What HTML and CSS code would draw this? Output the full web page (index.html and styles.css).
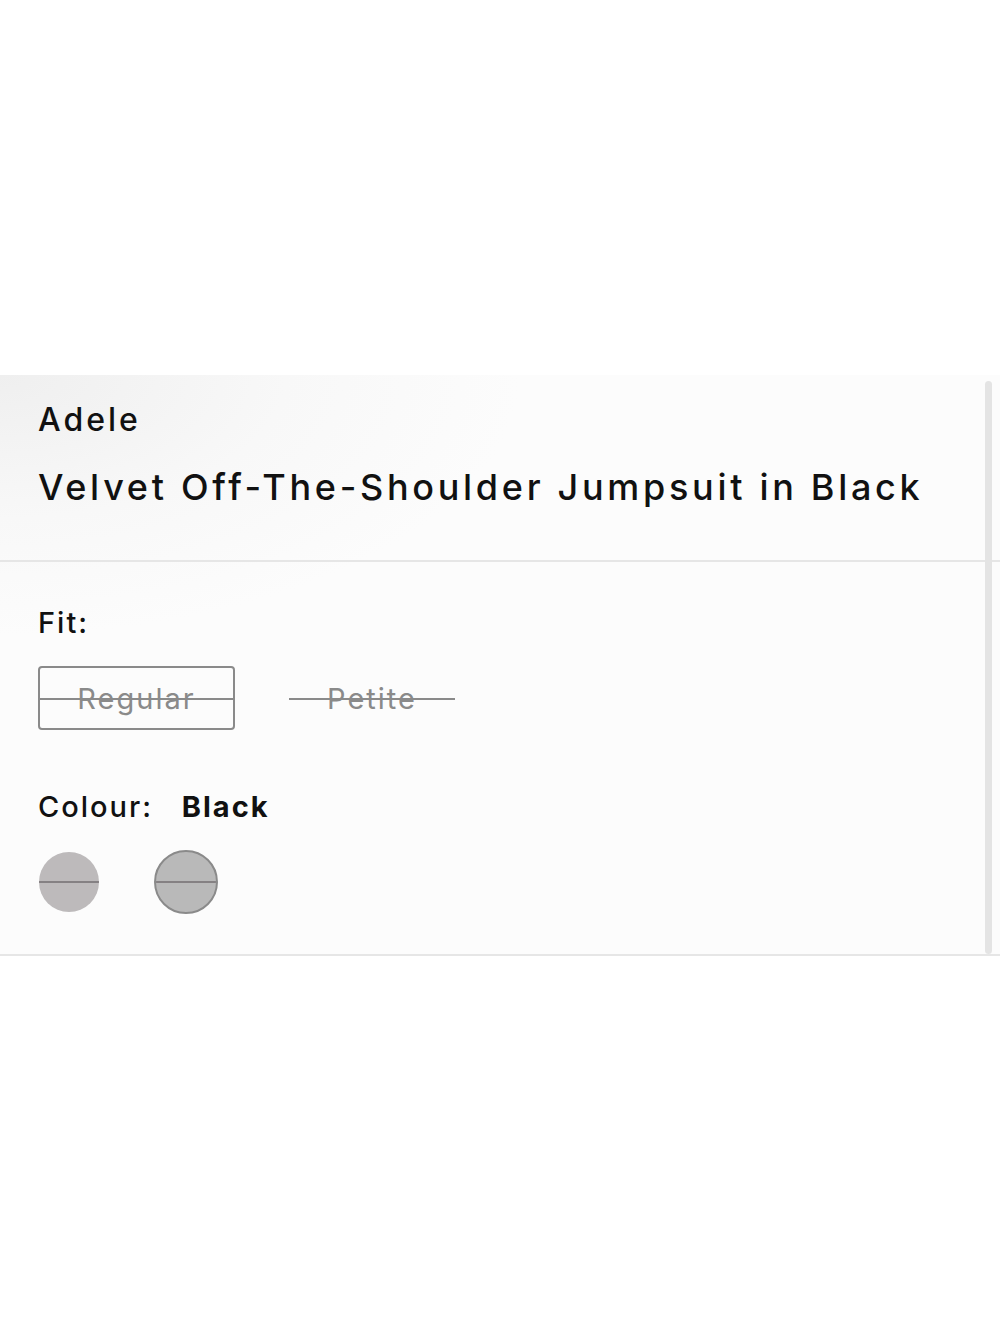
FILE: index.html
```html
<!DOCTYPE html>
<html lang="en">
<head>
  <meta charset="UTF-8" />
  <meta name="viewport" content="width=device-width, initial-scale=1.0" />
  <title>Velvet Off-The-Shoulder Jumpsuit in Black</title>
  <link rel="stylesheet" href="styles.css">
</head>
<body>
  <div class="sheet">
    <div class="panel">
      <div class="product-head">
        <div class="brand">Adele</div>
        <h1 class="product-name">Velvet Off-The-Shoulder Jumpsuit in Black</h1>
      </div>

      <div class="options">
        <div class="label">Fit:</div>
        <div class="fits">
          <span class="fit fit-selected"><s>Regular</s></span>
          <span class="fit"><s>Petite</s></span>
        </div>

        <div class="label">Colour: <b class="colour-name">Black</b></div>
        <div class="swatches">
          <span class="swatch"></span>
          <span class="swatch swatch-selected"></span>
        </div>
      </div>
    </div>
    <div class="scrollbar"></div>
  </div>
</body>
</html>
```

FILE: styles.css
```css
body {
  margin: 0;
  font-family: "Inter", "Noto Sans", sans-serif;
  color: #111;
  background-color: #fff;
}
.sheet {
  position: relative;
  margin-top: 375px;
}
.panel {
  background: radial-gradient(ellipse 520px 260px at 0 0, #efefef 0%, #f8f8f8 55%, #fcfcfc 100%);
  border-bottom: 2px solid #e6e6e6;
}
.product-head {
  padding: 25px 0 51px 38px;
  border-bottom: 2px solid #e6e6e6;
}
.brand {
  font-size: 32px;
  font-weight: 500;
  line-height: 40px;
  letter-spacing: 3px;
}
.product-name {
  margin: 25px 0 0;
  font-size: 36px;
  font-weight: 500;
  line-height: 44px;
  letter-spacing: 3.7px;
}
.options {
  padding: 42px 0 40px 38px;
}
.label {
  font-size: 29px;
  font-weight: 500;
  line-height: 38px;
  letter-spacing: 2px;
}
.colour-name {
  margin-left: 19px;
  font-weight: 700;
}
.fits {
  display: flex;
  align-items: center;
  gap: 54px;
  margin: 24px 0 58px;
}
.fit {
  position: relative;
  display: flex;
  align-items: center;
  justify-content: center;
  box-sizing: border-box;
  height: 64px;
  color: #8a8a8a;
  font-size: 29px;
  letter-spacing: 2px;
}
.fit s {
  text-decoration: none;
}
/* struck-out line across the whole option */
.fit::after {
  content: "";
  position: absolute;
  left: 0;
  right: 0;
  top: 50%;
  height: 2px;
  background-color: #8a8a8a;
}
.fit-selected {
  width: 197px;
  border: 2px solid #8a8a8a;
  border-radius: 4px;
}
.fit:not(.fit-selected) {
  width: 166px;
}
.swatches {
  display: flex;
  align-items: center;
  gap: 55px;
  margin: 24px 0 0 1px;
}
.swatch {
  position: relative;
  width: 60px;
  height: 60px;
  border-radius: 50%;
  background-color: #bdbabb;
  overflow: hidden;
}
.swatch::after {
  content: "";
  position: absolute;
  left: 0;
  right: 0;
  top: 50%;
  height: 2px;
  margin-top: -1px;
  background-color: #858183;
}
.swatch-selected {
  width: 64px;
  height: 64px;
  box-sizing: border-box;
  border: 2px solid #8a8a8a;
  background-color: #b9b9b9;
}
.scrollbar {
  position: absolute;
  top: 6px;
  bottom: 2px;
  right: 8px;
  width: 7px;
  border-radius: 4px;
  background-color: #e4e4e4;
}
```
